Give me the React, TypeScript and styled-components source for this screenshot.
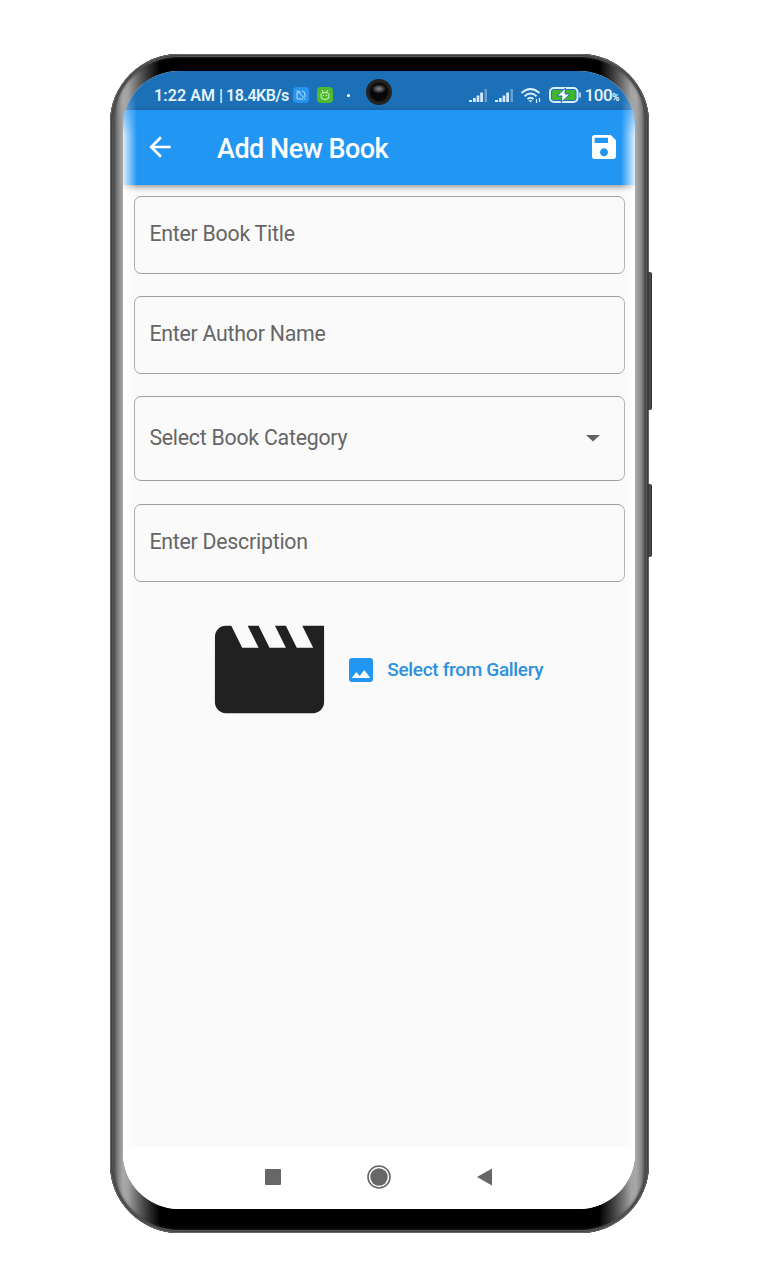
import React from 'react';
import styled, { createGlobalStyle } from 'styled-components';
import { MdArrowBack, MdSave, MdMovie, MdImage } from 'react-icons/md';

const Global = createGlobalStyle`
  * { box-sizing: border-box; }
  body { margin: 0; background: #fff; font-family: Roboto, "Liberation Sans", sans-serif; }
`;

const Page = styled.main`
  width: 759px;
  height: 1280px;
  padding: 54px 110px 47px;
`;

const Device = styled.div`
  position: relative;
  width: 539px;
  height: 1179px;
  padding: 17px 14px 24px 13px;
  border-radius: 69px;
  background:
    linear-gradient(90deg, transparent 18px, #000 50px, #000 489px, transparent 521px) top / 100% 70px no-repeat,
    linear-gradient(90deg, transparent 18px, #000 50px, #000 489px, transparent 521px) bottom / 100% 70px no-repeat,
    linear-gradient(90deg, #484848, #606060 5px, #8c8c8c 9px, #a8a8a8 13px, #888 40px, #888 499px, #a8a8a8 526px, #8a8a8a 531px, #555 535px, #484848);
`;

const Rim = styled.div`
  position: absolute;
  inset: 0;
  border-radius: 69px;
  box-shadow: inset 0 0 0 1px #666, inset 0 0 0 2px #404040, inset 0 0 0 3px #555, inset 0 0 3px 3px #333;
`;

const SideKey = styled.span<{ $top: number; $height: number }>`
  position: absolute;
  left: 538px;
  top: ${p => p.$top}px;
  width: 4px;
  height: ${p => p.$height}px;
  border-radius: 0 2px 2px 0;
  background: linear-gradient(90deg, #333, #555 55%, #222);
`;

const Screen = styled.div`
  position: relative;
  height: 1138px;
  display: flex;
  flex-direction: column;
  overflow: hidden;
  border-radius: 56px;
  background: #fafafa;
`;

const EdgeGlow = styled.div`
  position: absolute;
  inset: 0;
  pointer-events: none;
  background:
    linear-gradient(90deg, rgba(255,255,255,.85), rgba(255,255,255,0) 14px),
    linear-gradient(270deg, rgba(255,255,255,.85), rgba(255,255,255,0) 14px);
  mask-image: linear-gradient(transparent 10px, #000 65px);
`;

const StatusBar = styled.header`
  height: 39px;
  flex: none;
  display: flex;
  align-items: center;
  padding: 9px 16px 0 31px;
  background: #1b70b7;
  color: #e5f2fc;
`;

const Clock = styled.div`
  flex: none;
  display: flex;
  width: 139px;
  font-size: 16px;
  font-weight: 600;
  white-space: nowrap;
`;

const Time = styled.span`
  width: 65px;
  letter-spacing: 0.1px;
`;

const Speed = styled.span`
  letter-spacing: -0.48px;
`;

const Badge = styled.span<{ $color: string }>`
  display: flex;
  flex: none;
  width: 16px;
  height: 16px;
  margin-right: 8px;
  border-radius: 4px;
  background: ${p => p.$color};
`;

const Dot = styled.span`
  width: 3px;
  height: 3px;
  margin-left: 6px;
  border-radius: 50%;
  background: #fff;
`;

const Indicators = styled.div`
  display: flex;
  align-items: center;
  margin-left: auto;
  gap: 6px;
`;

const Percent = styled.span`
  font-size: 17px;
  font-weight: 500;
  letter-spacing: -0.5px;
  margin-left: -2px;
  small { font-size: 10px; font-weight: 700; }
`;

const Camera = styled.span`
  position: absolute;
  left: 243px;
  top: 8px;
  width: 26px;
  height: 26px;
  border-radius: 50%;
  background: radial-gradient(ellipse 7px 4.5px at 50% 38%, #8b8b91, #45454a 60%, transparent),
    radial-gradient(circle, #08080a 45%, #262322 58%, #211e1d 100%);
`;

const AppBar = styled.div`
  height: 75px;
  flex: none;
  display: flex;
  align-items: center;
  padding: 0 15px 1px 21px;
  background: #2196f3;
  color: #fff;
  box-shadow: 0 2px 6px rgba(0,0,0,.42);
`;

const Title = styled.h1`
  flex: 1;
  margin: 4px 0 0 41px;
  font-size: 27px;
  line-height: 32px;
  font-weight: 500;
  letter-spacing: -0.5px;
`;

const Form = styled.section`
  flex: 1;
  display: flex;
  flex-direction: column;
  gap: 22.3px;
  padding: 10.8px 10px 0 11px;
`;

const Field = styled.div<{ $height?: number }>`
  height: ${p => p.$height ?? 78}px;
  flex: none;
  display: flex;
  align-items: center;
  justify-content: space-between;
  padding: 0 24px 2.6px 14.4px;
  border: 1.4px solid #a0a0a0;
  border-radius: 7px;
  color: #666;
  font-size: 21.3px;
  letter-spacing: -0.24px;
`;

const Picker = styled.div`
  display: flex;
  align-items: center;
  justify-content: center;
  height: 132px;
  padding-right: 11.5px;
  gap: 10px;
  color: #212121;
`;

const GalleryButton = styled.div`
  display: flex;
  align-items: center;
  gap: 10px;
  color: #2d91dc;
  font-size: 19px;
  font-weight: 500;
  letter-spacing: -0.32px;
  svg { color: #2196f3; }
`;

const NavBar = styled.nav`
  height: 62px;
  flex: none;
  display: flex;
  align-items: center;
  justify-content: center;
  gap: 86px;
  padding-bottom: 2px;
  background: #fff;
`;

const Signal = () => (
  <svg width="20" height="15" viewBox="0 0 20 15" fill="#d5ebfb">
    <path d="M1 12h3v2H1zM5 10h2.700v4H5zM8.600 7.500h2.700V14H8.600zM12.200 4.500H15V14h-2.800z" />
    <path d="M16.500 1H19v13h-2.500z" opacity=".4" />
  </svg>
);

const Wifi = () => (
  <svg width="22" height="17" viewBox="0 0 22 17" fill="none" stroke="#dceffd" strokeWidth="2">
    <path d="M1.500 6Q10.500 -2 19.500 6M4.500 9.200Q10.500 3.700 16.500 9.200M7.500 12Q10.500 9.500 13.500 12" />
    <path d="M8.500 13.200h4l-2 2.300z" fill="#dceffd" stroke="none" />
    <path d="M16.500 12v4M19.500 11v4" strokeWidth="1.200" />
  </svg>
);

const Battery = () => (
  <svg width="33" height="16" viewBox="0 0 33 16">
    <rect x="2" y="1" width="27.500" height="14" rx="4" fill="none" stroke="#d9edfb" strokeWidth="2" />
    <rect x="4" y="3" width="23.500" height="10" rx="1.500" fill="#42b52f" />
    <path d="M32 5.500v5" stroke="#d9edfb" strokeWidth="1.500" />
    <path d="M17.500 1L9 9h5L13 15.500 22 7h-5z" fill="#fff" stroke="#1b70b7" strokeWidth="1" />
  </svg>
);

export default function App() {
  return (
    <Page>
      <Global />
      <Device>
        <Rim />
        <SideKey $top={218} $height={138} />
        <SideKey $top={430} $height={73} />
        <Screen>
          <StatusBar>
            <Clock><Time>1:22 AM</Time><Speed>| 18.4KB/s</Speed></Clock>
            <Badge $color="#2794ee">
              <svg width="16" height="16" viewBox="0 0 16 16" fill="none" stroke="#bcdffc">
                <path d="M4 12V5l2-1 1.500 2M9 4q3 0 3 4v2M4 3.500l8.500 9M4 12h6" />
              </svg>
            </Badge>
            <Badge $color="#4fb92f">
              <svg width="16" height="16" viewBox="0 0 16 16" fill="none" stroke="#d5f5cb">
                <path d="M4 7.500q0-2 4-2t4 2v2q0 3-4 3t-4-3zM5 3l1.500 2.500M11 3L9.500 5.500M6.500 8v1M9.500 8v1" />
              </svg>
            </Badge>
            <Dot />
            <Indicators>
              <Signal /><Signal /><Wifi /><Battery />
              <Percent>100<small>%</small></Percent>
            </Indicators>
          </StatusBar>
          <AppBar>
            <MdArrowBack size={32} />
            <Title>Add New Book</Title>
            <MdSave size={32} />
          </AppBar>
          <Form>
            <Field>Enter Book Title</Field>
            <Field>Enter Author Name</Field>
            <Field $height={85}>
              Select Book Category
              <svg width="14" height="8" viewBox="0 0 14 8"><path d="M0 1h14L7 7.500z" fill="#616161" /></svg>
            </Field>
            <Field>Enter Description</Field>
            <Picker>
              <MdMovie size={131} />
              <GalleryButton><MdImage size={32} />Select from Gallery</GalleryButton>
            </Picker>
          </Form>
          <NavBar>
            <svg width="16" height="16"><rect width="16" height="16" rx="1" fill="#676767" /></svg>
            <svg width="24" height="24" fill="#676767"><circle cx="12" cy="12" r="8.700" /><circle cx="12" cy="12" r="11" fill="none" stroke="#676767" strokeWidth="1.600" /></svg>
            <svg width="16" height="18"><path d="M15 .5v17L0 9z" fill="#676767" /></svg>
          </NavBar>
          <EdgeGlow />
          <Camera />
        </Screen>
      </Device>
    </Page>
  );
}
